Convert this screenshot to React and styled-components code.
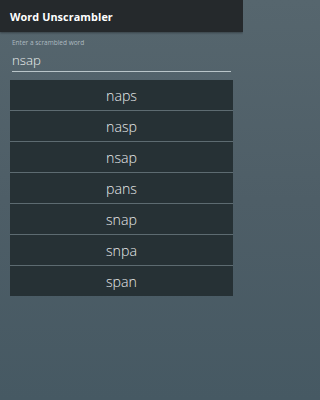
import React from "react";
import styled, { createGlobalStyle } from "styled-components";

const Global = createGlobalStyle`
  html, body { margin: 0; padding: 0; height: 100%; }
  body {
    font-family: "Open Sans", "Noto Sans", sans-serif;
    background: linear-gradient(180deg, #56666e 0%, #4e5e67 50%, #465963 100%);
  }
  #root { height: 100%; }
`;

const Screen = styled.div`
  width: 243px;
  height: 400px;
  display: flex;
  flex-direction: column;
  background: linear-gradient(180deg, #56666e 0%, #4e5e67 50%, #465963 100%);
  overflow: hidden;
`;

const Header = styled.header`
  height: 32px;
  flex: 0 0 32px;
  background: #25292c;
  display: flex;
  align-items: center;
  padding-left: 10px;
  box-shadow: 0 1px 2px rgba(0, 0, 0, 0.35);
  color: #ffffff;
  font-weight: 700;
  font-size: 10.8px;
  letter-spacing: 0.1px;
`;

const Body = styled.main`
  display: flex;
  flex-direction: column;
  padding: 7px 10px 0 10px;
`;

const Field = styled.div`
  display: flex;
  flex-direction: column;
  padding: 0 2px;
`;

const Label = styled.label`
  font-size: 6.5px;
  color: #aebbc0;
  line-height: 8px;
`;

const Input = styled.div`
  margin-top: 4px;
  font-size: 13.2px;
  line-height: 18px;
  color: #ecefef;
  font-weight: 300;
  padding-bottom: 2px;
  border-bottom: 1px solid #b9c5c9;
`;

const List = styled.div`
  margin-top: 8px;
  display: flex;
  flex-direction: column;
  gap: 1px;
  background: #5d6b71;
`;

const Word = styled.div`
  height: 30px;
  background: #263135;
  color: #e6e9ea;
  display: flex;
  align-items: center;
  justify-content: center;
  font-size: 14.2px;
  font-weight: 300;
`;

const words = ["naps", "nasp", "nsap", "pans", "snap", "snpa", "span"];

export default function App() {
  return (
    <>
      <Global />
      <Screen>
        <Header>Word Unscrambler</Header>
        <Body>
          <Field>
            <Label>Enter a scrambled word</Label>
            <Input>nsap</Input>
          </Field>
          <List>
            {words.map((w) => (
              <Word key={w}>{w}</Word>
            ))}
          </List>
        </Body>
      </Screen>
    </>
  );
}
